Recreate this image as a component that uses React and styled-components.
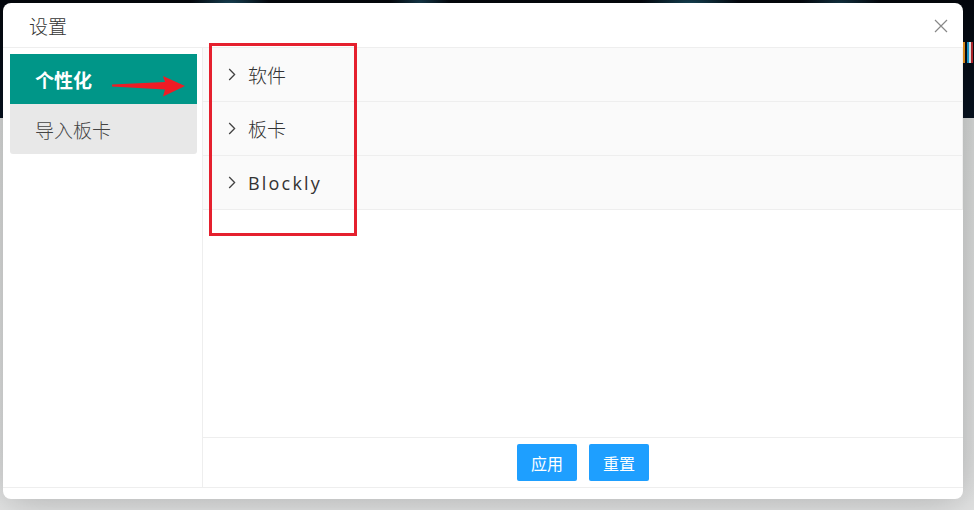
import React from 'react'
import styled, {createGlobalStyle} from 'styled-components'

const GlobalStyle = createGlobalStyle`
    html, body {
        margin: 0;
        padding: 0;
    }
    body {
        font-family: "Noto Sans CJK SC", "Noto Sans", sans-serif;
        background: #dddfde;
    }
`

//items of the right panel
const sections = ['软件', '板卡', 'Blockly']

function Chevron() {
    return (
        <svg width="8" height="13" viewBox="0 0 8 13">
            <path d="M1.2 1 L6.6 6.5 L1.2 12" fill="none" stroke="#444" strokeWidth="1.3" />
        </svg>
    )
}

function CloseIcon() {
    return (
        <svg width="14" height="14" viewBox="0 0 14 14">
            <path d="M1 1 L13 13 M13 1 L1 13" stroke="#888" strokeWidth="1.2" fill="none" />
        </svg>
    )
}

function App() {
    return (
        <>
            <GlobalStyle />
            <Page>
                <BackdropLogo />
                <Dialog>
                    <Header>
                        <Title>设置</Title>
                        <CloseButton><CloseIcon /></CloseButton>
                    </Header>
                    <Body>
                        <Sidebar>
                            <NavItem active>个性化</NavItem>
                            <NavItem last>导入板卡</NavItem>
                        </Sidebar>
                        <Panel>
                            <Collapse>
                                {sections.map(name => (
                                    <CollapseItem key={name}>
                                        <Chevron />
                                        <ItemTitle latin={name === 'Blockly'}>{name}</ItemTitle>
                                    </CollapseItem>
                                ))}
                            </Collapse>
                            <Footer>
                                <Button>应用</Button>
                                <Button>重置</Button>
                            </Footer>
                        </Panel>
                    </Body>
                    <BottomSpace />
                    <Arrow width="80" height="30" viewBox="0 0 80 30">
                        <polygon points="0,9.5 53,7 51,1 73,11 51,21.5 53,14.5 0,11.5" fill="#ee1c25" />
                    </Arrow>
                    <Marker />
                </Dialog>
            </Page>
        </>
    )
}

const Page = styled.div`
    position: relative;
    height: 510px;
    padding: 3px 0 0 3px;
    box-sizing: border-box;
    overflow: hidden;
    background:
        radial-gradient(ellipse 40px 14px at 230px 4px, rgba(40, 120, 150, 0.6), transparent),
        radial-gradient(ellipse 30px 12px at 420px 2px, rgba(40, 110, 140, 0.5), transparent),
        radial-gradient(ellipse 50px 14px at 690px 4px, rgba(40, 130, 160, 0.55), transparent),
        radial-gradient(ellipse 40px 12px at 840px 3px, rgba(40, 110, 140, 0.45), transparent),
        linear-gradient(to bottom, #04070d 0, #071220 118px, #d9dbda 118px, #e3e4e4 100%);
`

//bit of the page's logo peeking out from behind the dialog
const BackdropLogo = styled.div`
    position: absolute;
    left: 963px;
    top: 42px;
    width: 10px;
    height: 21px;
    background: linear-gradient(to right,
        #f39a1e 0 2px, transparent 2px 4px,
        #1aa3d9 4px 6px, #f2f2f2 6px 8px, #b8282e 8px 10px);
`

const Dialog = styled.div`
    position: relative;
    width: 960px;
    height: 496px;
    background: #fff;
    border-radius: 8px;
    box-shadow: 1px 1px 40px rgba(0, 0, 0, 0.25);
    display: flex;
    flex-direction: column;
    overflow: hidden;
`

const Header = styled.div`
    height: 44px;
    flex: none;
    border-bottom: 1px solid #eee;
    display: flex;
    align-items: center;
    justify-content: space-between;
    padding: 0 15px 0 26px;
`

const Title = styled.div`
    font-size: 19px;
    font-weight: 300;
    color: #333;
    line-height: 1;
`

const CloseButton = styled.div`
    display: flex;
    align-items: center;
    margin-top: 2px;
`

const Body = styled.div`
    height: 439px;
    flex: none;
    display: flex;
    border-bottom: 1px solid #eee;
`

const Sidebar = styled.div`
    width: 200px;
    flex: none;
    box-sizing: border-box;
    padding: 6px 5px 0 7px;
    border-right: 1px solid #eee;
`

const NavItem = styled.div`
    height: 50px;
    display: flex;
    align-items: center;
    padding-left: 25px;
    font-size: 19px;
    font-weight: ${p => p.active ? 'bold' : '300'};
    color: ${p => p.active ? '#fff' : '#444'};
    background: ${p => p.active ? '#009688' : '#e8e8e8'};
    border-radius: ${p => p.last ? '0 0 3px 3px' : '0'};
`

const Panel = styled.div`
    flex: 1;
    display: flex;
    flex-direction: column;
`

const Collapse = styled.div`
    flex: 1;
`

const CollapseItem = styled.div`
    height: 53px;
    border-bottom: 1px solid #eee;
    border-right: 1px solid #eee;
    background: #fafafa;
    display: flex;
    align-items: center;
    gap: 12px;
    padding-left: 25px;
`

const ItemTitle = styled.span`
    font-family: ${p => p.latin ? '"Open Sans", sans-serif' : '"Noto Sans CJK SC", sans-serif'};
    font-size: ${p => p.latin ? '18px' : '19px'};
    font-weight: ${p => p.latin ? '400' : '300'};
    letter-spacing: ${p => p.latin ? '2.2px' : '0'};
    color: #333;
    line-height: 1;
`

const Footer = styled.div`
    height: 49px;
    flex: none;
    border-top: 1px solid #eee;
    display: flex;
    align-items: center;
    justify-content: center;
    gap: 12px;
`

const Button = styled.div`
    width: 60px;
    height: 37px;
    border-radius: 2px;
    background: #1e9fff;
    color: #fff;
    font-size: 16px;
    display: flex;
    align-items: center;
    justify-content: center;
`

const BottomSpace = styled.div`
    flex: 1;
`

const Arrow = styled.svg`
    position: absolute;
    left: 109px;
    top: 72px;
`

const Marker = styled.div`
    position: absolute;
    left: 206px;
    top: 40px;
    width: 142px;
    height: 187px;
    border: 3px solid #e5202e;
`

export default App
